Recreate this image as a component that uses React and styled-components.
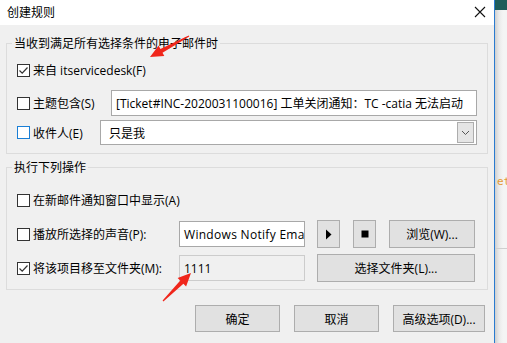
import React from "react";
import styled, { createGlobalStyle } from "styled-components";

const Global = createGlobalStyle`
  html, body { margin: 0; padding: 0; overflow: hidden; background: #f0f0f0; }
  * { box-sizing: border-box; }
`;

const FONT = `"Segoe UI", "Open Sans", "Noto Sans CJK SC", sans-serif`;

const Screen = styled.div`
  position: relative;
  width: 507px;
  height: 343px;
  display: flex;
  font-family: ${FONT};
  font-size: 12px;
  color: #000;
`;

const Dialog = styled.div`
  width: 494px;
  height: 343px;
  display: flex;
  flex-direction: column;
  background: #f0f0f0;
`;

const Edge = styled.div`
  width: 1px;
  background: #2a7bd0;
`;

const Desktop = styled.div`
  flex: 1;
  display: flex;
  flex-direction: column;
  background: linear-gradient(90deg, #cfcfcf 0px, #eaeaea 4px, #f4f4f4 8px);
  overflow: hidden;
`;

const DesktopTop = styled.div`
  height: 10px;
  background: #1f5d5a;
`;

const DesktopCode = styled.div`
  margin-top: 165px;
  padding-left: 2px;
  font-family: "DejaVu Sans Mono", monospace;
  font-size: 11px;
  color: #e59a35;
  white-space: nowrap;
  height: 14px;
  line-height: 14px;
`;

const DesktopRule = styled.div`
  margin-top: 59px;
  height: 1px;
  background: #cfcfcf;
`;

const TitleBar = styled.div`
  height: 25px;
  background: #fff;
  display: flex;
  align-items: center;
  justify-content: space-between;
  padding: 0 8px 2px 7px;
  font-family: "Noto Sans CJK SC", sans-serif;
  font-size: 12px;
`;

const Body = styled.div`
  flex: 1;
  display: flex;
  flex-direction: column;
  padding: 0 6px;
`;

const Group = styled.fieldset`
  margin: ${(p) => p.$top}px 0 0 0;
  border: 1px solid #dcdcdc;
  padding: 0 10px ${(p) => p.$bottom}px 10px;
  min-width: 0;
  display: flex;
  flex-direction: column;
`;

const Legend = styled.legend`
  margin-left: -5px;
  padding: 0 2px;
  height: 16px;
  line-height: 16px;
  font-family: "Noto Sans CJK SC", sans-serif;
  font-size: 12px;
`;

const Row = styled.div`
  display: flex;
  align-items: center;
  height: ${(p) => p.$h}px;
  margin-top: ${(p) => p.$top}px;
`;

const Box = styled.span`
  width: 13px;
  height: 13px;
  flex: none;
  border: 1px solid ${(p) => (p.$focus ? "#1a7fd6" : "#333")};
  background: #fff;
  display: flex;
  align-items: center;
  justify-content: center;
`;

const Label = styled.span`
  margin-left: 3px;
  white-space: nowrap;
  ${(p) => (p.$w ? `width: ${p.$w}px; flex: none;` : "")}
`;

const TextField = styled.div`
  margin-left: auto;
  width: ${(p) => p.$w}px;
  height: ${(p) => p.$h}px;
  flex: none;
  background: #fff;
  border: 1px solid #a8a8a8;
  display: flex;
  align-items: center;
  padding-left: 4px;
  white-space: nowrap;
  overflow: hidden;
`;

const Combo = styled.div`
  margin-left: auto;
  width: ${(p) => p.$w}px;
  height: 25px;
  flex: none;
  background: #fff;
  border: 1px solid #a8a8a8;
  display: flex;
  align-items: center;
  padding: 0 2px 0 8px;
`;

const ComboText = styled.span`
  flex: 1;
`;

const DropBtn = styled.span`
  width: 17px;
  height: 21px;
  border: 1px solid #adadad;
  background: #e5e5e5;
  display: flex;
  align-items: center;
  justify-content: center;
`;

const Btn = styled.div`
  width: ${(p) => p.$w}px;
  height: ${(p) => p.$h || 28}px;
  margin-left: ${(p) => p.$gap || 0}px;
  flex: none;
  background: #e1e1e1;
  border: 1px solid #adadad;
  display: flex;
  align-items: center;
  justify-content: center;
  white-space: nowrap;
`;

const Field = styled.div`
  width: 126px;
  height: 26px;
  flex: none;
  background: ${(p) => (p.$dim ? "#f0f0f0" : "#fff")};
  border: 1px solid ${(p) => (p.$dim ? "#cccccc" : "#a8a8a8")};
  display: flex;
  align-items: center;
  padding-left: 4px;
  white-space: nowrap;
  overflow: hidden;
  letter-spacing: ${(p) => (p.$wide ? "0.3px" : "normal")};
`;

const Footer = styled.div`
  display: flex;
  justify-content: flex-end;
  gap: 14px;
  margin-top: 15px;
  padding-right: 3px;
`;

const Overlay = styled.svg`
  position: absolute;
  left: 0;
  top: 0;
  pointer-events: none;
`;

const Check = ({ checked, focus }) => (
  <Box $focus={focus}>
    {checked && (
      <svg width="11" height="11" viewBox="0 0 11 11">
        <path d="M1.5 5.5 L4.2 8.2 L9.5 2.5" fill="none" stroke="#333" strokeWidth="1.2" />
      </svg>
    )}
  </Box>
);

function arrow(tail, tip) {
  const dx = tip[0] - tail[0];
  const dy = tip[1] - tail[1];
  const len = Math.hypot(dx, dy);
  const ux = dx / len, uy = dy / len;
  const nx = -uy, ny = ux;
  const head = 13, hw = 6, sw = 2.2, tw = 0.6;
  const bx = tip[0] - ux * head, by = tip[1] - uy * head;
  const pts = [
    [tail[0] + nx * tw, tail[1] + ny * tw],
    [bx + nx * sw, by + ny * sw],
    [bx + nx * hw, by + ny * hw],
    [tip[0], tip[1]],
    [bx - nx * hw, by - ny * hw],
    [bx - nx * sw, by - ny * sw],
    [tail[0] - nx * tw, tail[1] - ny * tw],
  ];
  return pts.map((p) => p.map((v) => v.toFixed(1)).join(",")).join(" ");
}

export default function App() {
  return (
    <>
      <Global />
      <Screen>
        <Dialog>
          <TitleBar>
            <span>创建规则</span>
            <svg width="12" height="12" viewBox="0 0 12 12">
              <path d="M1 1 L11 11 M11 1 L1 11" stroke="#111" strokeWidth="1.1" />
            </svg>
          </TitleBar>
          <Body>
            <Group $top={10} $bottom={8}>
              <Legend>当收到满足所有选择条件的电子邮件时</Legend>
              <Row $h={20} $top={9}>
                <Check checked />
                <Label>来自 itservicedesk(F)</Label>
              </Row>
              <Row $h={26} $top={10}>
                <Check />
                <Label>主题包含(S)</Label>
                <TextField $w={366} $h={26}>
                  [Ticket#INC-2020031100016] 工单关闭通知：TC -catia 无法启动
                </TextField>
              </Row>
              <Row $h={25} $top={4}>
                <Check focus />
                <Label>收件人(E)</Label>
                <Combo $w={377}>
                  <ComboText>只是我</ComboText>
                  <DropBtn>
                    <svg width="9" height="6" viewBox="0 0 9 6">
                      <path d="M1 1 L4.5 4.5 L8 1" fill="none" stroke="#555" strokeWidth="1" />
                    </svg>
                  </DropBtn>
                </Combo>
              </Row>
            </Group>
            <Group $top={5} $bottom={7}>
              <Legend>执行下列操作</Legend>
              <Row $h={20} $top={15}>
                <Check />
                <Label>在新邮件通知窗口中显示(A)</Label>
              </Row>
              <Row $h={28} $top={10}>
                <Check />
                <Label $w={146}>播放所选择的声音(P):</Label>
                <Field $wide>Windows Notify Email</Field>
                <Btn $w={23} $gap={12}>
                  <svg width="7" height="11" viewBox="0 0 7 11">
                    <path d="M1 0.5 L6.5 5.5 L1 10.5 Z" fill="#000" />
                  </svg>
                </Btn>
                <Btn $w={23} $gap={13}>
                  <svg width="8" height="8" viewBox="0 0 8 8">
                    <rect x="0.5" y="0.5" width="7" height="7" fill="#000" />
                  </svg>
                </Btn>
                <Btn $w={86} $gap={13}>浏览(W)...</Btn>
              </Row>
              <Row $h={28} $top={6}>
                <Check checked />
                <Label $w={146}>将该项目移至文件夹(M):</Label>
                <Field $dim>1111</Field>
                <Btn $w={158} $gap={12}>选择文件夹(L)...</Btn>
              </Row>
            </Group>
            <Footer>
              <Btn $w={85} $h={27}>确定</Btn>
              <Btn $w={85} $h={27}>取消</Btn>
              <Btn $w={92} $h={27}>高级选项(D)...</Btn>
            </Footer>
          </Body>
        </Dialog>
        <Edge />
        <Desktop>
          <DesktopTop />
          <DesktopCode>et1</DesktopCode>
          <DesktopRule />
        </Desktop>
        <Overlay width="507" height="343" viewBox="0 0 507 343">
          <polygon points={arrow([189, 36], [150, 57])} fill="#f0261b" />
          <polygon points={arrow([163, 301], [191, 273])} fill="#f0261b" />
        </Overlay>
      </Screen>
    </>
  );
}
